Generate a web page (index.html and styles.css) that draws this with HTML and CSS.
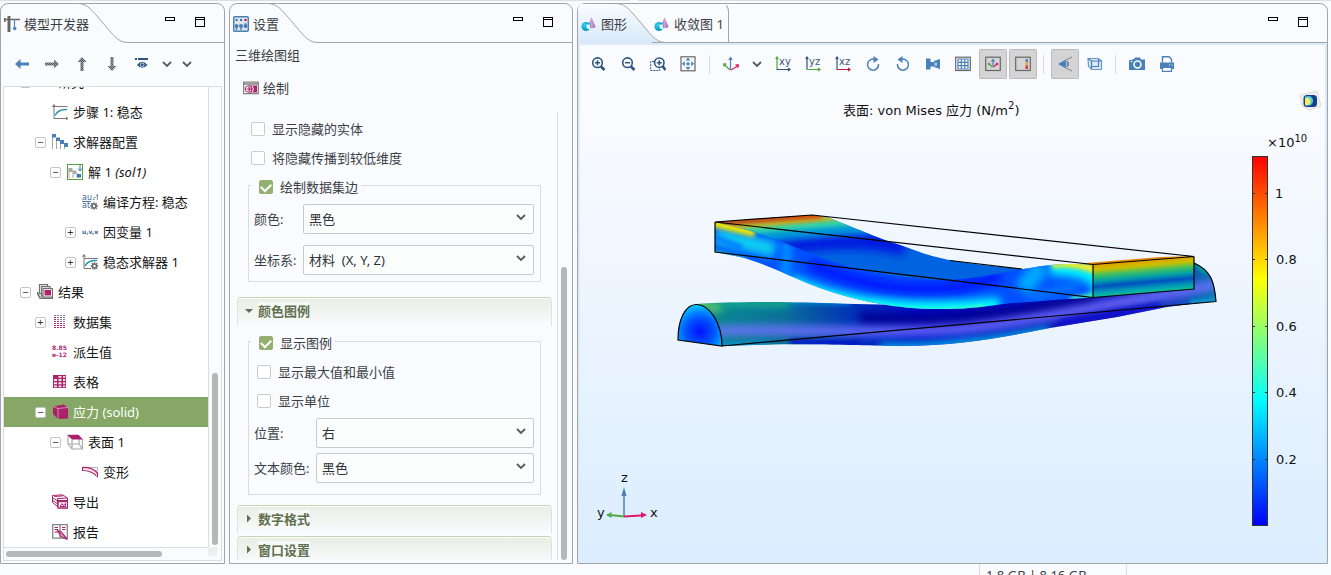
FILE: index.html
```html
<!DOCTYPE html>
<html lang="zh-CN">
<head>
<meta charset="utf-8">
<title>模型开发器</title>
<link rel="stylesheet" href="styles.css">
</head>
<body>
<svg class="defs" width="0" height="0" aria-hidden="true">
  <defs>
    <linearGradient id="tabFill" x1="0" y1="0" x2="0" y2="1"><stop offset="0" stop-color="#fafbff"/><stop offset="1" stop-color="#d8e9fa"/></linearGradient>
    <linearGradient id="cone" x1="0" x2="1"><stop offset="0" stop-color="#8d4f9c"/><stop offset=".5" stop-color="#d3a6dc"/><stop offset="1" stop-color="#93519f"/></linearGradient>
    <radialGradient id="ball" cx=".35" cy=".35"><stop offset="0" stop-color="#35d3f5"/><stop offset="1" stop-color="#0aa0c8"/></radialGradient>
    <symbol id="i-plot" viewBox="0 0 16 16"><path d="M10.500 1 L14.500 11 Q11 13.500 7 11Z" fill="url(#cone)"/><circle cx="5" cy="10.500" r="4.500" fill="url(#ball)"/><path d="M5.500 8.500h3.500v4.500h-2.500q-1.500-1-1-4.500z" fill="#e4f8fd"/></symbol>
    <symbol id="i-caret" viewBox="0 0 12 12"><path d="M2 4l4 4 4-4" fill="none" stroke="#555b60" stroke-width="1.800"/></symbol>
    <symbol id="i-gear" viewBox="0 0 8 8"><circle cx="4" cy="4" r="2" fill="none" stroke="#696969" stroke-width="1.600"/><path d="M4 .2v1.600M4 6.200v1.600M.2 4h1.600M6.200 4h1.600M1.300 1.300l1.100 1.100M5.600 5.600l1.100 1.100M6.700 1.300L5.600 2.400M2.400 5.600L1.300 6.700" stroke="#696969" stroke-width="1.300"/></symbol>
    <pattern id="hatch" width="2" height="2" patternUnits="userSpaceOnUse"><rect width="2" height="2" fill="#98a1aa"/><rect width="1" height="1" fill="#4c565f"/><rect x="1" y="1" width="1" height="1" fill="#4c565f"/></pattern>
  </defs>
</svg>

<div class="app">
  <div class="topline"><span class="topline-a"></span><span class="topline-b"></span></div>

  <main class="panels">
    <section class="panel">
      <header class="head">
        <h2 class="tab"><svg class="ic" viewBox="0 0 16 16"><path d="M5 0v16" stroke="#666" stroke-width="3"/><path d="M0 3.500h16" stroke="#666" stroke-width="1.500"/><path d="M.8 2v4" stroke="#666" stroke-width="1.600"/><path d="M10.500 3v9" stroke="#4c83bb" stroke-width="1.200" /><circle cx="10.700" cy="12.500" r="1.800" fill="#4c83bb"/></svg>模型开发器</h2>
        <svg class="curve" viewBox="0 0 51 40"><path d="M0 .5C9 .5 13 5 20 13L31 26C38 34 42 39.500 51 39.500" fill="none" stroke="#a3a4a8"/></svg>
        <div class="head-rest"><button class="win" aria-label="最小化"><span class="min"></span></button><button class="win" aria-label="最大化"><span class="max"></span></button></div>
      </header>
      <div class="nav-tools">
        <button class="nt" aria-label="后退"><svg class="ic" viewBox="0 0 16 16"><path d="M1 8l5.500-5v3.500H15v3H6.500V13z" fill="#4a82bb"/></svg></button>
        <button class="nt" aria-label="前进"><svg class="ic" viewBox="0 0 16 16"><path d="M15 8L10 3.500V6.500H1v3h9v3z" fill="url(#hatch)"/></svg></button>
        <button class="nt" aria-label="上移"><svg class="ic" viewBox="0 0 16 16"><path d="M8 1l4.500 5H9.500v9h-3V6h-3z" fill="url(#hatch)"/></svg></button>
        <button class="nt" aria-label="下移"><svg class="ic" viewBox="0 0 16 16"><path d="M8 15l-4.500-5h3V1h3v9h3z" fill="url(#hatch)"/></svg></button>
        <button class="nt" aria-label="显示"><svg class="ic" viewBox="0 0 16 16"><path d="M1 3h2M4 3h10" stroke="#2d5580" stroke-width="1.800"/><path d="M3 9q5-6.500 10.500 0q-5.500 5.500-10.500 0z" fill="#2d5580"/><circle cx="8.200" cy="8.800" r="2.300" fill="#b8cbe0"/><circle cx="8.200" cy="8.800" r="1.400" fill="#2d5580"/></svg></button>
        <button class="nt small" aria-label="显示选项"><svg class="ic12"><use href="#i-caret"/></svg></button>
        <button class="nt small" aria-label="更多"><svg class="ic12"><use href="#i-caret"/></svg></button>
      </div>
      <div class="tree-box">
        <ul class="tree">
          <li class="row l1"><span class="exp"></span><span class="icgap"></span>研究 1</li>
          <li class="row l2"><span class="noexp"></span><svg class="ic" viewBox="0 0 16 16"><path d="M2 1v13.500h13M.5 2.500h15" fill="none" stroke="#777"/><path d="M3 11.500Q6 5 15 5.500" fill="none" stroke="#2693b5" stroke-width="1.500"/><path d="M14 13l2 1.500-2 1.500M.5 3L2 .5 3.500 3" fill="none" stroke="#777"/></svg>步骤 1: 稳态</li>
          <li class="row l2"><button class="exp" aria-label="折叠">−</button><svg class="ic" viewBox="0 0 16 16"><path d="M.5 3v12M4.500 7v8M8.500 8v7M12.500 13v2" stroke="#a5a5a5"/><path d="M0 0h4v3.500H0zM4 3.500h4V7H4zM8 6h4v4H8zM12 9h4v4h-4z" fill="#4a80b8"/></svg>求解器配置</li>
          <li class="row l3"><button class="exp" aria-label="折叠">−</button><svg class="ic" viewBox="0 0 16 16"><rect x=".5" y=".5" width="15" height="15" fill="#fff" stroke="#55a03f"/><path d="M1.500 4h4v4h-4zM5.500 6.500h4v3.500h-4z" fill="#aaa"/><path d="M2 8v6M6 10v4M10 9v5" stroke="#aaa"/><path d="M10 10h4v3.500h-4z" fill="#3f78b5"/><path d="M13 1v6M11.200 4.500L13 7 14.800 4.500" stroke="#3f78b5" fill="none"/></svg>解 1 <em>(sol1)</em></li>
          <li class="row l4"><span class="noexp"></span><svg class="ic" viewBox="0 0 16 16"><g class="eq"><text x="0" y="6">au</text><text x="0" y="14">at</text><text x="11" y="6">-f</text></g><path d="M0 7.500h9M11 5.500h1.500" stroke="#4d76a0"/><svg x="8" y="8" width="8" height="8"><use href="#i-gear"/></svg></svg>编译方程: 稳态</li>
          <li class="row l4"><button class="exp" aria-label="展开">+</button><svg class="ic" viewBox="0 0 16 16"><text class="uvw" x="0" y="10">u,v,w</text></svg>因变量 1</li>
          <li class="row l4"><button class="exp" aria-label="展开">+</button><svg class="ic" viewBox="0 0 16 16"><path d="M2 1v13.500h7M2 4.500h14M.5 3L2 .5 3.500 3" fill="none" stroke="#777"/><path d="M3 12Q6 6 15 6.500" fill="none" stroke="#2693b5" stroke-width="1.500"/><svg x="8.500" y="8" width="8" height="8"><use href="#i-gear"/></svg></svg>稳态求解器 1</li>
          <li class="row l1"><button class="exp" aria-label="折叠">−</button><svg class="ic" viewBox="0 0 16 16"><g fill="#fff" stroke="#707070" stroke-width="1.200"><path d="M2.500.7h8v9h-8z"/><path d="M4.500 2.700h8.500v9H4.500z"/><path d="M.5 8l2 5h13v1.500H3L.5 10z"/><path d="M6 4.700h9.500v8.300H6z"/></g><path d="M7.500 6H14v5.500H7.500z" fill="#b0226b"/></svg>结果</li>
          <li class="row l2"><button class="exp" aria-label="展开">+</button><svg class="ic" viewBox="0 0 16 16"><g stroke-width="1" stroke-dasharray="2 1" fill="none"><path d="M2 1.500h12M2 3.500h12M2 5.500h12M2 7.500h12M2 9.500h12M2 11.500h12M2 13.500h12" stroke="#8c8088"/><path d="M2 3.500h3M2 5.500h3M2 7.500h6M2 9.500h8M2 11.500h12M2 13.500h12" stroke="#a8286a"/></g></svg>数据集</li>
          <li class="row l2"><span class="noexp"></span><svg class="ic" viewBox="0 0 16 16"><g class="num"><text x="0" y="6">8.85</text><text x="0" y="13">e-12</text></g></svg>派生值</li>
          <li class="row l2"><span class="noexp"></span><svg class="ic" viewBox="0 0 16 16"><path d="M1 1h13v13H1z" fill="#a92468"/><path d="M2 5h3v2H2zM6.500 5h3v2h-3zM11 5h2.300v2H11zM2 8.300h3v2H2zM6.500 8.300h3v2h-3zM11 8.300h2.300v2H11zM2 11.500h3v1.700H2zM6.500 11.500h3v1.700h-3zM11 11.500h2.300v1.700H11zM6.500 2h3v1.700h-3zM11 2h2.300v1.700H11z" fill="#f6dfea"/></svg>表格</li>
          <li class="row l2 selected"><button class="exp" aria-label="折叠">−</button><svg class="ic" viewBox="0 0 16 16"><path d="M1 2.500L11.500.5 16 3.500V14.500L6 15 1 10z" fill="#aa2069"/><path d="M1 2.500L6 4.500V15M6 4.500l10-1" fill="none" stroke="#e3a4c4" stroke-width=".8"/></svg>应力 (solid)</li>
          <li class="row l3"><button class="exp" aria-label="折叠">−</button><svg class="ic" viewBox="0 0 16 16"><path d="M1 2v8l4 5h10.500V5M5 5.500V15M12 5v5H1M12 10l3.500 5" fill="none" stroke="#a8a8b0" stroke-width="1.200"/><path d="M0 .8h11.500L16 5.500H5z" fill="#aa2069"/></svg>表面 1</li>
          <li class="row l4"><span class="noexp"></span><svg class="ic" viewBox="0 0 16 16"><path d="M1 3.500h14.500v3.500H7" fill="none" stroke="#b5b5b5"/><path d="M.5 3.500Q10 3 15.500 9v3.500Q9 6.500.5 6.500z" fill="#f7dbe8" stroke="#a92468" stroke-width="1.200"/></svg>变形</li>
          <li class="row l2"><span class="noexp"></span><svg class="ic" viewBox="0 0 16 16"><g fill="#fff" stroke="#a92468"><path d="M.5 1.500L10.500.8 15.500 4v8l-10 .5-5-4z"/><path d="M2.500 2.500l9-.7M1 4l4 2.500M1 6.500l4 3M5.500 4.500v8M5.500 4.500l10-.5M5.500 6.500h10M5.500 8h10"/><path d="M6 7.500h9.500v6.500H6z" stroke-width="1.300"/><path d="M8 12.500l2-3 1 2 2.500-2v3z"/></g></svg>导出</li>
          <li class="row l2"><span class="noexp"></span><svg class="ic" viewBox="0 0 16 16"><path d="M.7.700h14.600v13.500H.7zM8 .7v13" fill="#fff" stroke="#85858a" stroke-width="1.300"/><path d="M2.500 3.500H6M2.500 5.500H6M2.500 8H6M10 3.500h3.500M10 5.500h3.500" stroke="#a92468"/><path d="M5.500 6.500l4 1.500 6 7.500-6.500-3z" fill="#f3c6dc" stroke="#a92468" stroke-width="1.100"/><path d="M7 8l7 6" stroke="#a92468"/></svg>报告</li>
        </ul>
        <div class="vbar"><span class="vthumb"></span></div>
        <div class="hbar"><span class="hthumb"></span></div>
        <div class="corner"></div>
      </div>
    </section>

    <section class="panel">
      <header class="head">
        <h2 class="tab"><svg class="ic" viewBox="0 0 16 16"><rect x=".7" y=".7" width="14.600" height="14.600" rx="1" fill="#dfe3e8" stroke="#4682b8" stroke-width="1.400"/><path d="M2.500 3h2v2h-2zM7 3h2v2H7z" fill="#3b74ab"/><path d="M11.500 3h2v2h-2z" fill="#c00d4f"/><g fill="#4a80b8"><circle cx="3.500" cy="10" r="2"/><circle cx="8" cy="10" r="2"/><circle cx="12.500" cy="10" r="2"/></g><path d="M3.500 10v4M8 10v4M12.500 7v5" stroke="#4a80b8" stroke-width="1.400"/></svg>设置</h2>
        <svg class="curve" viewBox="0 0 51 40"><path d="M0 .5C9 .5 13 5 20 13L31 26C38 34 42 39.500 51 39.500" fill="none" stroke="#a3a4a8"/></svg>
        <div class="head-rest"><button class="win" aria-label="最小化"><span class="min"></span></button><button class="win" aria-label="最大化"><span class="max"></span></button></div>
      </header>
      <div class="form-head">
        <p class="form-title">三维绘图组</p>
        <button class="plot-btn"><svg class="ic" viewBox="0 0 16 16"><path d="M.7 2.200h14.600v11.500H.7zM.7 4h14.600" fill="#fff" stroke="#808080" stroke-width="1.300"/><path d="M5 5.500h9v7H5z" fill="#a92468"/><circle cx="5.500" cy="9" r="3.200" fill="#fff" stroke="#a92468"/><path d="M3.500 9h3.500M5.500 7.200L7.200 9 5.500 10.800" stroke="#a92468" stroke-width="1.200" fill="none"/><path d="M9.300 6q2 3 0 6" stroke="#fff" fill="none"/></svg>绘制</button>
      </div>
      <div class="form-scroll">
        <form class="form">
          <div class="checks top">
            <label class="check"><input type="checkbox">显示隐藏的实体</label>
            <label class="check"><input type="checkbox">将隐藏传播到较低维度</label>
          </div>
          <fieldset class="group">
            <legend><label class="check"><input type="checkbox" checked>绘制数据集边</label></legend>
            <div class="fields wide">
              <label for="c1">颜色:</label>
              <div class="sel"><select id="c1"><option>黑色</option></select><svg class="arrow"><use href="#i-caret"/></svg></div>
              <label for="c2">坐标系:</label>
              <div class="sel"><select id="c2"><option>材料&nbsp; (X, Y, Z)</option></select><svg class="arrow"><use href="#i-caret"/></svg></div>
            </div>
          </fieldset>
          <button type="button" class="sec first"><span class="tri down"></span><span class="sec-t">颜色图例</span></button>
          <fieldset class="group second">
            <legend><label class="check"><input type="checkbox" checked>显示图例</label></legend>
            <div class="checks">
              <label class="check"><input type="checkbox">显示最大值和最小值</label>
              <label class="check"><input type="checkbox">显示单位</label>
            </div>
            <div class="fields">
              <label for="c3">位置:</label>
              <div class="sel"><select id="c3"><option>右</option></select><svg class="arrow"><use href="#i-caret"/></svg></div>
              <label for="c4">文本颜色:</label>
              <div class="sel"><select id="c4"><option>黑色</option></select><svg class="arrow"><use href="#i-caret"/></svg></div>
            </div>
          </fieldset>
          <button type="button" class="sec closed"><span class="tri"></span><span class="sec-t">数字格式</span></button>
          <button type="button" class="sec"><span class="tri"></span><span class="sec-t">窗口设置</span></button>
        </form>
        <div class="form-bar"><span class="vthumb"></span></div>
      </div>
    </section>

    <section class="panel graph">
      <header class="head">
        <h2 class="tab active"><svg class="ic"><use href="#i-plot"/></svg>图形</h2>
        <svg class="curve" viewBox="0 0 51 40"><path d="M0 1C9 1 13 5 20 13L31 26C38 34 42 39.500 51 40H0z" fill="url(#tabFill)"/><path d="M0 .5C9 .5 13 5 20 13L31 26C38 34 42 39.500 51 39.500" fill="none" stroke="#a3a4a8"/></svg>
        <h2 class="tab other"><svg class="ic"><use href="#i-plot"/></svg>收敛图 1</h2>
        <div class="head-rest"><button class="win" aria-label="最小化"><span class="min"></span></button><button class="win" aria-label="最大化"><span class="max"></span></button></div>
      </header>
      <div class="view">
        <div class="tools">
          <button class="tb" aria-label="放大"><svg class="ic" viewBox="0 0 16 16"><g fill="none" stroke="#2f5680"><circle cx="7.500" cy="6.700" r="4.800" stroke-width="1.600"/><path d="M11 10.500L14.500 14" stroke-width="2.600"/><path d="M5 6.700h5M7.500 4.200v5" stroke-width="1.500"/></g></svg></button>
          <button class="tb" aria-label="缩小"><svg class="ic" viewBox="0 0 16 16"><g fill="none" stroke="#2f5680"><circle cx="7.500" cy="6.700" r="4.800" stroke-width="1.600"/><path d="M11 10.500L14.500 14" stroke-width="2.600"/><path d="M5 6.700h5" stroke-width="1.500"/></g></svg></button>
          <button class="tb" aria-label="框选缩放"><svg class="ic" viewBox="0 0 16 16"><g fill="none" stroke="#2f5680"><path d="M4 5.500H.7v9h9V12" stroke-dasharray="2 1"/><circle cx="9.300" cy="6.700" r="4.700" stroke-width="1.600"/><path d="M12.500 10L15.500 14" stroke-width="2.600"/><path d="M6.800 6.700h5M9.300 4.200v5" stroke-width="1.500"/></g></svg></button>
          <button class="tb" aria-label="缩放到窗口"><svg class="ic" viewBox="0 0 16 16"><rect x="1" y=".8" width="14" height="14" fill="none" stroke="#666" stroke-width="1.200"/><path d="M8 1.500l2.500 3h-5zM8 14l2.500-3h-5zM1.800 7.800l3-2.500v5zM14.200 7.800l-3-2.500v5z" fill="#4a80b8"/><path d="M6 7.800h4M8 5.800v4" stroke="#4a80b8" stroke-width="1.300"/></svg></button>
          <span class="sep"></span>
          <button class="tb" aria-label="默认视图"><svg class="ic" viewBox="0 0 16 16"><path d="M7.500 14V2M5.800 4l1.700-2.500L9.200 4" stroke="#4a80b8" fill="none" stroke-width="1.200"/><path d="M7 14L.8 8M.8 10.500V8h2.500" stroke="#55a845" fill="none" stroke-width="1.300"/><path d="M8 14L15.500 9.500M12.500 9h3.200l-1.200 2.700" stroke="#d9266c" fill="none" stroke-width="1.300"/></svg></button>
          <button class="tb narrow" aria-label="视图菜单"><svg class="ic12"><use href="#i-caret"/></svg></button>
          <button class="tb" aria-label="xy 视图"><svg class="ic" viewBox="0 0 16 16"><path d="M2 13V1M.7 3L2 1l1.300 2" stroke="#4fa83d" fill="none" stroke-width="1.200"/><path d="M1.500 13.500h13M13 12l2 1.500-2 1.500" stroke="#2f5680" fill="none" stroke-width="1.200"/><text x="4" y="9" class="axis-t">xy</text></svg></button>
          <button class="tb" aria-label="yz 视图"><svg class="ic" viewBox="0 0 16 16"><path d="M2 13V1M.7 3L2 1l1.300 2" stroke="#2f5680" fill="none" stroke-width="1.200"/><path d="M1.500 13.500h13M13 12l2 1.500-2 1.500" stroke="#4fa83d" fill="none" stroke-width="1.200"/><text x="4" y="9" class="axis-t">yz</text></svg></button>
          <button class="tb" aria-label="xz 视图"><svg class="ic" viewBox="0 0 16 16"><path d="M2 13V1M.7 3L2 1l1.300 2" stroke="#2f5680" fill="none" stroke-width="1.200"/><path d="M1.500 13.500h13M13 12l2 1.500-2 1.500" stroke="#b8233c" fill="none" stroke-width="1.200"/><text x="4" y="9" class="axis-t">xz</text></svg></button>
          <button class="tb" aria-label="顺时针旋转"><svg class="ic" viewBox="0 0 16 16"><path d="M10 3.500A5.500 5.500 0 1 0 13.500 8" fill="none" stroke="#4a80b8" stroke-width="1.500"/><path d="M8.500 0l5 3.500-5 3.500z" fill="#4a80b8"/></svg></button>
          <button class="tb" aria-label="逆时针旋转"><svg class="ic" viewBox="0 0 16 16"><path d="M6 3.500A5.500 5.500 0 1 1 2.500 8" fill="none" stroke="#4a80b8" stroke-width="1.500"/><path d="M7.500 0l-5 3.500 5 3.500z" fill="#4a80b8"/></svg></button>
          <button class="tb" aria-label="场景光"><svg class="ic" viewBox="0 0 16 16"><path d="M1 2.500h4.500v11H1zM5 6h4v4.500H5zM9 5l6-2v10l-6-2z" fill="#4a80b8"/><path d="M9.500 6.500h2.500v3.500H9.500z" fill="#a9c6e4"/></svg></button>
          <button class="tb" aria-label="网格"><svg class="ic" viewBox="0 0 16 16"><rect x=".7" y="1.200" width="14.600" height="13.300" fill="#fff" stroke="#666" stroke-width="1.200"/><path d="M3 3h10v10H3zM6.300 3v10M9.700 3v10M3 6.300h10M3 9.700h10" fill="none" stroke="#4a80b8" stroke-width="1.200"/></svg></button>
          <button class="tb on" aria-label="坐标轴方向"><svg class="ic" viewBox="0 0 16 16"><rect x=".7" y="1.200" width="14.600" height="13.300" fill="none" stroke="#666" stroke-width="1.200"/><path d="M8 11V4M6.500 5.500L8 3.500l1.500 2" fill="none" stroke="#4a80b8" stroke-width="1.200"/><path d="M7.500 11L4 8" stroke="#55a845" stroke-width="1.400"/><circle cx="4" cy="8" r="1.300" fill="#55a845"/><path d="M8.500 11L12 8" stroke="#d9266c" stroke-width="1.400"/><circle cx="12" cy="8" r="1.300" fill="#d9266c"/></svg></button>
          <button class="tb on" aria-label="显示图例"><svg class="ic" viewBox="0 0 16 16"><rect x=".7" y="1.200" width="14.600" height="13.300" fill="none" stroke="#666" stroke-width="1.200"/><path d="M10.500 3h2.500v3h-2.500z" fill="#5b83ad"/><path d="M10.500 6h2.500v3.500h-2.500z" fill="#e7a548"/><path d="M10.500 9.500h2.500V13h-2.500z" fill="#d93a40"/></svg></button>
          <span class="sep tight"></span>
          <button class="tb on" aria-label="正交投影"><svg class="ic" viewBox="0 0 16 16"><path d="M1 8L9 3.500v9z" fill="#4a80b8"/><circle cx="9" cy="8" r="3" fill="#4a80b8"/><path d="M9 5.500q2 2.500 0 5" fill="none" stroke="#d2d2d2"/><path d="M8 4.500L15 1M8 11.500l7 3.500" stroke="#858585"/></svg></button>
          <button class="tb" aria-label="透明度"><svg class="ic" viewBox="0 0 16 16"><path d="M1 2.500h10.500L14.500 5v8.500H4.500L1.500 10z" fill="#dbe8f5" stroke="#6c9ac8" stroke-width="1.200"/><path d="M4.500 5h10M4.500 5v8M1 2.500L4.500 5M4.500 10.500h7V3" fill="none" stroke="#4a80b8" stroke-width="1.200"/></svg></button>
          <span class="sep tight"></span>
          <button class="tb" aria-label="图像快照"><svg class="ic" viewBox="0 0 16 16"><path d="M0 4h3l1 -1h1l1-1.500h5L12 3.500h4V14H0z" fill="#4a80b8"/><circle cx="8.500" cy="8.500" r="3.500" fill="none" stroke="#fff" stroke-width="1.500"/><path d="M1.500 5.500h2" stroke="#fff"/></svg></button>
          <button class="tb" aria-label="打印"><svg class="ic" viewBox="0 0 16 16"><path d="M3.500 6.500V.8h6.500l2.500 2.500v3.200" fill="#fff" stroke="#4a80b8" stroke-width="1.400"/><path d="M1 6.500h14v6.500H1z" fill="#4a80b8"/><path d="M3.500 11.500h9v3.800h-9z" fill="#fff" stroke="#4a80b8" stroke-width="1.200"/><path d="M10 9h1M12.500 9h1" stroke="#fff"/></svg></button>
        </div>
        <svg class="plot" viewBox="580 80 745 483" role="img" aria-label="von Mises 应力">
          <defs>
            <linearGradient id="legend" x1="0" y1="0" x2="0" y2="1"><stop offset="0" stop-color="#f00"/><stop offset=".33" stop-color="#ff0"/><stop offset=".66" stop-color="#0ff"/><stop offset="1" stop-color="#00f"/></linearGradient>
            <linearGradient id="endFace" gradientUnits="userSpaceOnUse" x1="1142" y1="260" x2="1145" y2="294"><stop offset="0" stop-color="#e89a00"/><stop offset=".17" stop-color="#c8c000"/><stop offset=".33" stop-color="#40c060"/><stop offset=".5" stop-color="#00a0a8"/><stop offset=".66" stop-color="#0050c0"/><stop offset=".82" stop-color="#0098b8"/><stop offset="1" stop-color="#10c890"/></linearGradient>
            <linearGradient id="rod" gradientUnits="userSpaceOnUse" x1="700" y1="0" x2="1216" y2="0"><stop offset="0" stop-color="#0a8c90"/><stop offset=".16" stop-color="#0a7098"/><stop offset=".3" stop-color="#0030b8"/><stop offset=".42" stop-color="#0008c8"/><stop offset=".8" stop-color="#1010b0"/><stop offset=".92" stop-color="#1840c0"/><stop offset="1" stop-color="#0078a8"/></linearGradient>
            <radialGradient id="cap" cx=".5" cy=".65" r=".75"><stop offset="0" stop-color="#0010ff"/><stop offset=".45" stop-color="#0058ff"/><stop offset=".8" stop-color="#00b8ff"/><stop offset="1" stop-color="#20f0d0"/></radialGradient>
            <filter id="b2" filterUnits="userSpaceOnUse" x="660" y="190" width="580" height="180"><feGaussianBlur stdDeviation="2"/></filter>
            <filter id="b4" filterUnits="userSpaceOnUse" x="660" y="190" width="580" height="180"><feGaussianBlur stdDeviation="4"/></filter>
            <clipPath id="rodClip"><path d="M697 304Q716 302 740 302.500C780 301 830 304 940 306L1093 290L1194 263Q1206 268 1211 278 1215 287 1216 301L1167 307 1117 317 1050 328C1005 337 960 346 900 346 860 346 820 342 722 346z"/></clipPath>
            <clipPath id="topClip"><path d="M715 222L812 215 827 217C850 226 880 239 897 244 915 250 930 257 955 261Q985 266 1022 269L1040 290H860C830 275 790 250 715 222z"/></clipPath>
            <clipPath id="frontClip"><path d="M715 222C770 234 790 247 837 263 870 273 910 280 945 280 980 279 1000 272 1030 268Q1060 262 1093 265V297.500Q1050 300 1003 304C975 308 960 309.500 930 309 890 308 850 299 820 288 790 277 765 263 740 257L715 252z"/></clipPath>
          </defs>
          <g clip-path="url(#rodClip)">
            <path d="M680 255H1220V350H680z" fill="url(#rod)"/>
            <path d="M690 304L722 308" stroke="#70d860" stroke-width="7" fill="none" filter="url(#b4)"/>
            <path d="M722 302L790 303" stroke="#18b890" stroke-width="7" fill="none" filter="url(#b4)"/>
            <path d="M790 302L850 303" stroke="#0098e8" stroke-width="3" fill="none" filter="url(#b2)"/>
            <path d="M860 318Q960 326 1093 299" stroke="#000090" stroke-width="12" fill="none" filter="url(#b4)"/>
            <path d="M715 331C800 328 870 335 960 329 1030 322 1090 307 1150 297L1220 284" stroke="#7070ff" stroke-width="9" fill="none" filter="url(#b4)"/>
            <path d="M722 346L770 344" stroke="#1090d0" stroke-width="6" fill="none" filter="url(#b2)"/>
            <path d="M790 342L860 344" stroke="#0018c8" stroke-width="6" fill="none" filter="url(#b2)"/>
            <path d="M880 348Q950 349 1050 331" stroke="#00b0e0" stroke-width="10" fill="none" filter="url(#b4)"/>
            <path d="M1060 323L1160 306" stroke="#0810d0" stroke-width="6" fill="none" filter="url(#b2)"/>
            <path d="M1196 262L1208 272" stroke="#00a898" stroke-width="7" fill="none" filter="url(#b2)"/>
            <path d="M1190 303L1218 300" stroke="#10a0d8" stroke-width="5" fill="none" filter="url(#b2)"/>
          </g>
          <path d="M678 340C678 320 685 304 697 304.500 710 305 722 324 722 346z" fill="url(#cap)" stroke="#000" stroke-width="1.200"/>
          <g clip-path="url(#topClip)">
            <path d="M710 210H1045V295H710z" fill="#0064e0"/>
            <path d="M770 248Q860 234 905 248" stroke="#0018e0" stroke-width="16" fill="none" filter="url(#b4)"/>
            <path d="M740 238L870 227" stroke="#00b0d8" stroke-width="9" fill="none" filter="url(#b4)"/>
            <path d="M728 232L850 222" stroke="#30d8a8" stroke-width="7" fill="none" filter="url(#b2)"/>
            <path d="M715 228L840 217" stroke="#e8d800" stroke-width="5" fill="none" filter="url(#b2)"/>
            <path d="M705 222L822 214" stroke="#e05000" stroke-width="9" fill="none" filter="url(#b2)"/>
          </g>
          <g clip-path="url(#frontClip)">
            <path d="M710 210H1100V315H710z" fill="#0050ff"/>
            <path d="M715 236Q745 242 775 250" stroke="#10d0f0" stroke-width="16" fill="none" filter="url(#b4)"/>
            <path d="M708 222L755 233" stroke="#f0e800" stroke-width="8" fill="none" filter="url(#b2)"/>
            <path d="M712 236L742 248" stroke="#0080ff" stroke-width="6" fill="none" filter="url(#b2)"/>
            <path d="M712 253L745 261" stroke="#40f0a0" stroke-width="5" fill="none" filter="url(#b2)"/>
            <path d="M787 240L785 280" stroke="#00a0ff" stroke-width="8" fill="none" filter="url(#b4)"/>
            <path d="M810 264Q880 296 960 287L1000 277" stroke="#0010ff" stroke-width="10" fill="none" filter="url(#b4)"/>
            <path d="M790 282C820 296 880 317 1000 305" stroke="#00ffff" stroke-width="15" fill="none" filter="url(#b4)"/>
            <path d="M830 295C880 311 930 315 985 307" stroke="#70ff90" stroke-width="3" fill="none" filter="url(#b2)"/>
            <path d="M1042 266L1022 290" stroke="#00a8ff" stroke-width="18" fill="none" filter="url(#b4)"/>
            <path d="M1050 268Q1075 266 1100 280V300" stroke="#00f0ff" stroke-width="16" fill="none" filter="url(#b4)"/>
            <path d="M1030 298L1080 284" stroke="#0080ff" stroke-width="7" fill="none" filter="url(#b4)"/>
            <path d="M1052 264Q1075 261 1098 271" stroke="#f8f020" stroke-width="8" fill="none" filter="url(#b2)"/>
            <path d="M1070 300L1096 295" stroke="#50ffb0" stroke-width="5" fill="none" filter="url(#b2)"/>
          </g>
          <path d="M1080 263.500L1160 257 1194 256 1093 265z" fill="#e88800"/>
          <path d="M1093 264.500L1194 256V289L1093 297.500z" fill="url(#endFace)"/>
          <g fill="none" stroke="#000" stroke-width="1.200">
            <path d="M812 215L715 222L1093 264.500L1194 256.500zM715 222V252L1093 297.500V264.500M1093 297.500L1194 289V256.500"/>
            <path d="M722 346L1216 301.500Q1215 287 1211 278 1206 268 1194 263M950 260.500L1022 269"/>
          </g>
          <rect x="1252.500" y="156.500" width="15" height="369" fill="url(#legend)" stroke="#333"/>
          <path d="M1252 193.500h3m10 0h3M1252 259.500h3m10 0h3M1252 326.500h3m10 0h3M1252 392.500h3m10 0h3M1252 459.500h3m10 0h3" stroke="#333" stroke-width="1.200"/>
          <g class="plot-t">
            <text x="843" y="115">表面: von Mises 应力 (N/m<tspan class="sup" dy="-6">2</tspan><tspan dy="6">)</tspan></text>
            <text x="1267" y="147">×10<tspan class="sup" dy="-5">10</tspan></text>
            <text x="1275" y="198">1</text><text x="1276" y="264">0.8</text><text x="1276" y="331">0.6</text><text x="1276" y="397">0.4</text><text x="1276" y="464">0.2</text>
            <text x="621" y="482">z</text><text x="597" y="517">y</text><text x="650" y="517">x</text>
          </g>
          <path d="M624 517V494" stroke="#4a80b8" stroke-width="1.500"/><path d="M624 487l2.500 9h-5z" fill="#4a80b8"/>
          <path d="M624 516.500L610 515" stroke="#55a845" stroke-width="1.800"/><path d="M606 515l5.500-3v6z" fill="#55a845"/>
          <path d="M624 516.500L641 515.500" stroke="#e0186c" stroke-width="1.800"/><path d="M647 515l-6-3v6z" fill="#e0186c"/>
          <path d="M1300 95l17-4 4 15-12 4-7-4z" fill="#eeeeec" stroke="#dedede"/><rect x="1303.500" y="95" width="13.500" height="12" rx="3.500" fill="#173f91"/><path d="M1305 96.500q5-1 6.500.5 3.500 4-.5 8-3 1-6 .5z" fill="#54c6dc"/><path d="M1305 98q4-1 5.500 2 .5 4-2 5H1305z" fill="#f1ee61"/>
        </svg>
      </div>
    </section>
  </main>

  <footer class="status"><span class="memory">1.8 GB | 8.16 GB</span></footer>
</div>
</body>
</html>
```

FILE: styles.css
```css
* { box-sizing: border-box; }

body {
  margin: 0;
  height: 100vh;
  overflow: hidden;
  background: #fafbff;
  color: #3a3f44;
  font: 13px/18px "Noto Sans", "Noto Sans CJK SC", sans-serif;
}

button, select, input { font: inherit; color: inherit; margin: 0; }
button { border: 0; padding: 0; background: none; }

.defs { position: absolute; }
.ic { width: 16px; height: 16px; flex: none; display: block; }
.ic12 { width: 12px; height: 12px; display: block; }

.app {
  height: 100vh;
  display: grid;
  grid-template-rows: 3px minmax(0, 1fr) 11px;
}

.topline { display: flex; gap: 8px; }
.topline span { height: 1px; background: #dddde0; }
.topline-a { flex: 630; }
.topline-b { flex: 693; }

.panels {
  display: grid;
  grid-template-columns: 225fr 344fr 751fr;
  gap: 4px;
  padding-right: 3px;
  min-height: 0;
}

.panel {
  display: flex;
  flex-direction: column;
  min-width: 0;
  min-height: 0;
  border: 1px solid #a3a4a8;
  border-radius: 8px 8px 0 0;
}

/* Tab strip */
.head { display: flex; height: 40px; flex: none; margin-top: -1px; }
.tab {
  display: flex;
  align-items: center;
  gap: 4px;
  margin: 0;
  padding: 2px 0 0 3px;
  font-size: 13px;
  font-weight: 400;
  white-space: nowrap;
}
.curve { width: 51px; height: 40px; margin-left: -12px; flex: none; }
.head-rest {
  flex: 1;
  display: flex;
  justify-content: flex-end;
  align-items: flex-start;
  gap: 20px;
  padding: 14px 19px 0 0;
  border-bottom: 1px solid #a3a4a8;
}
.win { width: 10px; height: 10px; display: flex; align-items: flex-start; }
.min { width: 10px; height: 4px; border: 1px solid #000; }
.max { width: 10px; height: 10px; border: 1px solid #000; border-top-width: 3px; border-top-style: double; }

/* Model tree */
.nav-tools {
  display: flex;
  align-items: center;
  height: 43px;
  flex: none;
  padding: 0 0 2px 6px;
  background: #fafdfd;
}
.nt { width: 30px; height: 30px; display: grid; place-items: center; }
.nt.small { width: 20px; }
.tree-box {
  flex: 1;
  min-height: 0;
  margin: 0 2px 2px;
  display: grid;
  grid-template: minmax(0, 1fr) 13px / minmax(0, 1fr) 13px;
  border: 1px solid #dcdcde;
}
.tree {
  margin: 0;
  padding: 0;
  list-style: none;
  overflow: hidden;
  background: #fff;
  color: #151515;
}
.row {
  display: flex;
  align-items: center;
  height: 30px;
  white-space: pre;
}
.row:first-child { margin-top: -20px; }
.row .ic, .icgap { margin: 0 5px 0 6px; }
.icgap { width: 16px; }
.l1 { padding-left: 16px; }
.l2 { padding-left: 31px; }
.l3 { padding-left: 46px; }
.l4 { padding-left: 61px; }
.exp, .noexp { width: 11px; height: 11px; flex: none; }
.exp {
  border: 1px solid #c4c4c4;
  border-radius: 2px;
  background: #fff;
  color: #333;
  font-size: 11px;
  line-height: 8px;
  text-align: center;
}
.selected { background: #86a765; color: #fff; }
.eq { font: 8px "DejaVu Sans", sans-serif; fill: #3f6a98; }
.uvw { font: bold 6px "DejaVu Sans", sans-serif; fill: #41698f; }
.num { font: bold 6px "DejaVu Sans", sans-serif; fill: #b02a70; }
.vbar { border-left: 1px solid #dcdcde; padding-bottom: 2px; display: flex; align-items: flex-end; justify-content: center; }
.vthumb { width: 6px; border-radius: 3px; background: #b7b7b7; }
.vbar .vthumb { height: 37.5%; }
.hbar { border-top: 1px solid #dcdcde; padding-left: 2px; display: flex; align-items: center; }
.hthumb { width: 77%; height: 6px; border-radius: 3px; background: #b7b7b7; }
.corner { width: 9px; height: 9px; background: #efefef; }

/* Settings form */
.form-head { padding: 3px 5px 0; height: 69px; flex: none; }
.form-title { margin: 0 0 15px; }
.plot-btn { display: flex; align-items: center; gap: 4px; margin-left: 8px; height: 18px; }
.form-scroll { flex: 1; min-height: 0; display: flex; margin-bottom: 3px; }
.form { flex: 1; min-width: 0; overflow: hidden; padding: 8px 5px 0 7px; }
.form-bar { width: 15px; padding-right: 2px; border-left: 1px solid #dcdcde; display: flex; align-items: flex-end; justify-content: center; }
.form-bar .vthumb { height: 65.5%; }

.checks { display: flex; flex-direction: column; align-items: flex-start; gap: 11px; }
.checks.top { padding-left: 14px; margin-bottom: 7px; }
.check { display: flex; align-items: center; gap: 7px; height: 18px; }
.check input {
  appearance: none;
  width: 14px;
  height: 14px;
  flex: none;
  display: grid;
  place-items: center;
  border: 1px solid #cbcbcb;
  border-radius: 2px;
  background: #fff;
}
.check input:checked { background: #94b071; border-color: #94b071; }
.check input:checked::after {
  content: "";
  width: 8px;
  height: 5px;
  margin-bottom: 2px;
  border: solid #fff;
  border-width: 0 0 2px 2px;
  transform: rotate(-45deg);
}

.group {
  margin: 0 11px;
  min-width: 0;
  padding: 8px 6px 6px 5px;
  border: 1px solid #dcdcde;
}
.group legend { margin-inline-start: -3px; padding: 4px 3px 0 8px; }
.group.second { margin-top: 4px; padding-top: 11px; padding-bottom: 11px; }
.group .checks { padding-left: 3px; margin: 0 0 8px; }
.fields {
  display: grid;
  grid-template-columns: 62px minmax(0, 1fr);
  align-items: center;
  row-gap: 5px;
  white-space: nowrap;
}
.fields.wide { grid-template-columns: 49px minmax(0, 1fr); row-gap: 11px; }
.sel { position: relative; }
.sel select {
  display: block;
  appearance: none;
  width: 100%;
  height: 30px;
  padding: 0 5px;
  border: 1px solid #c9cacb;
  border-radius: 2px;
  background: #fcfefe;
  color: #2d3236;
}
.arrow { position: absolute; right: 7px; top: 7px; width: 12px; height: 12px; pointer-events: none; }

.sec {
  display: flex;
  align-items: center;
  width: 100%;
  height: 28px;
  margin-bottom: 3px;
  padding: 0 0 2px 7px;
  border: 1px solid;
  border-color: #c3d6b3 #dce6d5 transparent;
  border-bottom: 0;
  border-radius: 4px 4px 0 0;
  background: linear-gradient(#e8eee2, #fafbff);
  box-shadow: inset 0 1px #fff;
  color: #5f7050;
  font-weight: 700;
}
.sec.first { margin-top: 15px; margin-bottom: 0; height: 29px; }
.sec.closed { margin-top: 10px; }
.sec-t { margin-left: 5px; background: #f7f9f8; }
.tri { width: 8px; height: 8px; background: #5f7050; clip-path: polygon(25% 0, 75% 50%, 25% 100%); }
.tri.down { clip-path: polygon(0 25%, 100% 25%, 50% 75%); }

/* Graphics window */
.tab.active {
  background: linear-gradient(#fafbff, #d8e9fa) 0 1px / calc(100% - 12px) 100% no-repeat;
  border-radius: 7px 0 0 0;
}
.graph .curve { position: relative; z-index: -1; }
.graph { isolation: isolate; }
.tab.other {
  margin-left: -14px;
  padding-left: 2px;
  padding-right: 4px;
  border: 1px solid #a3a4a8;
  border-left: 0;
  border-radius: 0 8px 0 0;
  border-top-color: transparent;
}
.view {
  flex: 1;
  min-height: 0;
  display: flex;
  flex-direction: column;
  border: 2px solid #dcebfa;
  border-bottom: 0;
  background: linear-gradient(#fafbff 12%, #dbedff);
}
.tools { display: flex; align-items: center; gap: 2px; height: 35px; padding: 3px 0 0 4px; flex: none; }
.tb { width: 28px; height: 30px; flex: none; display: grid; place-items: center; }
.tb.narrow { width: 20px; }
.tb.on { background: #d4d4d4; border: 1px solid #bababa; border-radius: 2px; }
.sep { width: 1px; height: 19px; margin: 0 5px; background: #d8dadd; }
.sep.tight { margin-left: 4px; }
.axis-t { font: 10px "DejaVu Sans", sans-serif; fill: #3c5875; }
.plot { flex: 1; min-height: 0; width: 100%; display: block; }
.plot-t { font: 13px "DejaVu Sans", "Noto Sans CJK SC", sans-serif; fill: #111; }
.sup { font-size: 10px; }

/* Status bar */
.status { display: flex; padding-left: 73.55%; }
.memory { height: 30px; padding: 2px 39px 0 6px; border: solid #dcdce2; border-width: 0 1px; white-space: nowrap; }
```
